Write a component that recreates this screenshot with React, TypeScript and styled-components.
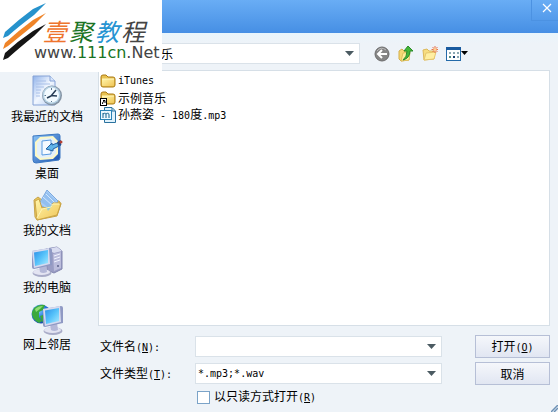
import React, { useState } from 'react';
import styled, { createGlobalStyle } from 'styled-components';

const GlobalStyle = createGlobalStyle`
  * { box-sizing: border-box; }
  body { margin: 0; }
  body, button, input, select {
    font-family: "Noto Sans CJK SC", sans-serif;
    font-size: 12px;
    line-height: 16px;
    color: #000;
  }
`;

const Dialog = styled.div`
  position: relative;
  display: flex;
  flex-direction: column;
  min-height: 100vh;
  background: #eef3f8;
`;

const TitleBar = styled.header`
  display: flex;
  justify-content: flex-end;
  height: 33px;
  background: linear-gradient(#69adf5, #468fe4);
`;

const CloseButton = styled.button`
  display: flex;
  align-items: flex-start;
  justify-content: center;
  width: 27px;
  height: 21px;
  padding: 3px 0 0 4px;
  border: solid #4c92e2;
  border-width: 0 0 1px 1px;
  background: transparent;
`;

const Body = styled.div`
  display: flex;
  flex: 1;
  background: linear-gradient(#e8f5fc, #eef3f8 10px);
`;

const Places = styled.nav`
  display: flex;
  flex-direction: column;
  gap: 8px;
  flex: none;
  width: 98px;
  padding: 42px 4px 0 0;
`;

const Place = styled.button`
  display: flex;
  flex-direction: column;
  align-items: center;
  gap: 1px;
  padding: 0;
  border: 0;
  background: transparent;
  white-space: nowrap;
`;

const Main = styled.main`
  display: flex;
  flex: 1;
  flex-direction: column;
  min-width: 0;
  padding-right: 8px;
`;

const Toolbar = styled.div`
  display: flex;
  align-items: center;
  gap: 8px;
  height: 37px;
  padding: 4px 82px 0 0;
`;

const ToolButton = styled.button`
  display: flex;
  padding: 0;
  border: 0;
  background: transparent;
`;

const ComboBox = styled.div<{ $trailing?: number }>`
  display: grid;
  flex: 1;
  align-items: center;
  min-width: 0;
  height: 21px;
  margin-right: ${(p) => p.$trailing ?? 0}px;
  border: 1px solid #dae2e9;
  background: #fff;
`;

const ComboSelect = styled.select<{ $indent: number }>`
  grid-area: 1 / 1;
  appearance: none;
  width: 100%;
  height: 19px;
  padding: 0 20px 0 ${(p) => p.$indent}px;
  border: 0;
  background: transparent;
  outline: none;
`;

const TypeSelect = styled(ComboSelect)`
  font-family: "DejaVu Sans Mono", monospace;
  font-size: 10px;
`;

const ComboInput = styled.input`
  grid-area: 1 / 1;
  width: 100%;
  height: 19px;
  padding: 0 20px 0 2px;
  border: 0;
  background: transparent;
  outline: none;
`;

const Arrow = styled.svg`
  grid-area: 1 / 1;
  justify-self: end;
  margin-right: 5px;
  pointer-events: none;
`;

const FileList = styled.ul`
  flex: 1;
  margin: 0;
  padding: 1px;
  border: 1px solid #d6dfe7;
  background: #fff;
  list-style: none;
`;

const FileItem = styled.button`
  display: flex;
  align-items: center;
  gap: 2px;
  height: 17px;
  padding: 0;
  border: 0;
  background: transparent;
  white-space: pre;
`;

const Latin = styled.span`
  font-family: "DejaVu Sans Mono", monospace;
  font-size: 10px;
  white-space: pre;
`;

const Form = styled.form`
  display: grid;
  grid-template-columns: 97px 1fr 75px;
  grid-template-rows: 23px 23px 16px;
  row-gap: 4px;
  align-items: center;
  padding: 9px 0 7px;
`;

const FieldLabel = styled.label`
  padding-left: 2px;
`;

const PushButton = styled.button`
  height: 23px;
  padding: 0;
  border: 1px solid #b6bfd6;
  background: linear-gradient(#f5f7fb, #e1e6f2);
`;

const ReadOnly = styled.label`
  display: flex;
  grid-column: 2;
  align-items: center;
  gap: 4px;
  padding-left: 2px;
`;

const CheckBox = styled.input`
  appearance: none;
  width: 13px;
  height: 13px;
  margin: 0;
  border: 1px solid #7ba3c8;
  background: #fff;
  &:checked { background: #4a93e6; }
`;

const Grip = styled.svg`
  position: absolute;
  right: 0;
  bottom: 0;
`;

const Logo = styled.div`
  position: absolute;
  top: 0;
  left: 0;
  width: 162px;
  height: 72px;
  background: #fff;
`;

const LogoStripes = styled.svg`
  position: absolute;
  top: 0;
  left: 0;
`;

const LogoText = styled.div`
  position: relative;
  padding: 17px 0 0 34px;
`;

const LogoName = styled.div`
  display: flex;
  gap: 2px;
  padding-left: 9px;
  font-size: 24px;
  font-style: italic;
  font-weight: 400;
  line-height: 28px;
`;

const LogoUrl = styled.div`
  font-family: "DejaVu Sans", sans-serif;
  font-size: 16px;
  line-height: 16px;
  color: #444;
`;

const Tint = styled.span<{ $color: string }>`
  color: ${(p) => p.$color};
`;

const DropArrow = () => (
  <Arrow width="9" height="5" viewBox="0 0 9 5"><path d="M0 0H9L4.5 5Z" fill="#4b5b62" /></Arrow>
);

const Key = ({ k, colon }: { k: string; colon?: boolean }) => (
  <Latin>(<u>{k}</u>){colon ? ':' : ''}</Latin>
);

const Monitor = ({ x, y }: { x: number; y: number }) => (
  <g transform={`translate(${x} ${y})`}>
    <ellipse cx="10" cy="25" rx="9.500" ry="4" fill="#a9acc8" />
    <ellipse cx="9.500" cy="24" rx="8.500" ry="3" fill="#e3e4f2" />
    <path d="M7 18l7-1 1 7q-4 2-7 0z" fill="#b4b8d8" />
    <path d="M0 3L18 0Q20 0 20 2V17L2 21Q0 21 0 19Z" fill="#8f99c4" />
    <path d="M0 3L17 0 18 16 2 20Z" fill="#d5daef" />
    <path d="M2 4.500L16 2V15L3 18Z" fill="url(#screen)" />
  </g>
);

const Gradients = () => (
  <defs>
    <linearGradient id="screen" x1="0" y1="0" x2="1" y2="1">
      <stop offset="0" stopColor="#2c8ee6" /><stop offset=".5" stopColor="#56c2fa" /><stop offset="1" stopColor="#a9ebff" />
    </linearGradient>
    <linearGradient id="paper" x1="0" y1="0" x2="1" y2="1">
      <stop offset="0" stopColor="#8fb2ea" /><stop offset=".5" stopColor="#f2f7ff" /><stop offset="1" stopColor="#b4cdf3" />
    </linearGradient>
    <linearGradient id="desk" x1="0" y1="0" x2="1" y2="1">
      <stop offset="0" stopColor="#8cc6f8" /><stop offset="1" stopColor="#174fae" />
    </linearGradient>
    <linearGradient id="fold" x1="0" y1="0" x2="1" y2="1">
      <stop offset="0" stopColor="#fff5a9" /><stop offset="1" stopColor="#f0c558" />
    </linearGradient>
    <radialGradient id="globe" cx=".35" cy=".3" r=".8">
      <stop offset="0" stopColor="#8ad4ff" /><stop offset=".5" stopColor="#2878dc" /><stop offset="1" stopColor="#123a95" />
    </radialGradient>
  </defs>
);

const RecentIcon = () => (
  <svg width="32" height="32" viewBox="0 0 32 32">
    <Gradients />
    <path d="M2 1H19L24 6V30H2Z" fill="url(#paper)" stroke="#86a2d6" />
    <path d="M19 1V6H24" fill="#d8e6fb" stroke="#86a3d6" />
    <path d="M5 6H15M5 9H19M5 12H13M5 15H10M5 18H9M5 21H9" stroke="#a9c0e8" />
    <circle cx="21" cy="20.500" r="10" fill="#8594a5" />
    <circle cx="20.500" cy="20" r="9" fill="#b3cfe2" />
    <circle cx="20.500" cy="20" r="7.500" fill="#f2faff" />
    <path d="M20 21L25 15M20 20.500L26 21M20 21L16 23" stroke="#273d56" strokeWidth="1.500" />
    <path d="M20.500 13V15M20.500 26V27M13.500 20.500H15" stroke="#5d7892" />
  </svg>
);

const DesktopIcon = () => (
  <svg width="32" height="32" viewBox="0 0 32 32">
    <path d="M2 4L27 2Q29 2 29 4V26L28 28L5 31Q2 31 2 28Z" fill="url(#desk)" stroke="#3a77c2" />
    <path d="M9 5L22 4 27 9V22L22 27 9 28 4 24V10Z" fill="#fbf8c8" />
    <path d="M10 7L21 6 25 10V21L21 25 10 26 6 22V11Z" fill="#e3f0fb" />
    <path d="M11 9L20 8V22L11 23Z" fill="#f5faff" stroke="#5a9be0" />
    <path d="M29 10L21 13V11L15 17 22 19V17L30 13Z" fill="#61b5e9" stroke="#2362a4" />
    <path d="M26 10L30 8V13L27 14Z" fill="#284e8c" />
    <circle cx="30" cy="10" r="1.500" fill="#b44136" />
  </svg>
);

const DocumentsIcon = () => (
  <svg width="32" height="32" viewBox="0 0 32 32">
    <path d="M3 11L7 8 11 11 28 12 30 15 26 27 6 31 4 28Z" fill="#eac85b" stroke="#c6a34b" />
    <path d="M16 1L27 12 20 23 8 15Z" fill="#a9cdf6" stroke="#7aa8de" />
    <path d="M16 3L25 12 18 19 10 13Z" fill="#92bff0" />
    <path d="M12 8L22 17M15 5L24 14" stroke="#d2e6fc" />
    <path d="M4 12L8 10 11 19 20 18 22 14 30 14 26 26 6 31Z" fill="url(#fold)" stroke="#cba546" />
    <path d="M15 18L22 16 17 22Z" fill="#8fc9df" />
    <path d="M6 29L11 20 20 18 22 15 28 15" fill="none" stroke="#fff6b8" />
  </svg>
);

const ComputerIcon = () => (
  <svg width="32" height="32" viewBox="0 0 32 32">
    <path d="M15 3L26 1 31 5V23L23 27 16 24Z" fill="#9a9dc4" stroke="#8286b0" />
    <path d="M15 3L26 1 31 5 23 7Z" fill="#d9dcf0" />
    <path d="M22 8L30 6V22L23 25Z" fill="#bcbddc" />
    <path d="M23 10L29 8M23 13L29 11M23 16L29 14" stroke="#f0f2ff" />
    <circle cx="27" cy="20" r="1" fill="#5d638b" />
    <Monitor x={1} y={2} />
  </svg>
);

const NetworkIcon = () => (
  <svg width="32" height="32" viewBox="0 0 32 32">
    <circle cx="10" cy="11" r="9.500" fill="url(#globe)" />
    <path d="M3 5Q8 1 14 2L12 7 8 9 8 14 11 18 8 20Q0 16 1 9ZM9 13L15 11 17 16 12 20Z" fill="#3ba93d" />
    <path d="M4 6Q7 3 12 3L9 6 5 9Z" fill="#91dd74" />
    <Monitor x={12} y={3} />
  </svg>
);

const Folder = ({ shortcut }: { shortcut?: boolean }) => (
  <svg width="16" height="16" viewBox="0 0 16 16">
    <path d="M1 4Q1 2 3 2H6L8 4H13Q15 4 15 6V12Q15 14 13 14H3Q1 14 1 12Z" fill="#e8c150" stroke="#ab7b14" />
    <path d="M2 6H14V12Q14 13 13 13H3Q2 13 2 12Z" fill="url(#fold)" />
    <path d="M2 6H14" stroke="#fff7be" />
    {shortcut && (
      <>
        <rect x=".5" y="8.500" width="6" height="7" fill="#fff" stroke="#000" />
        <path d="M2.500 14Q2 12 4.500 11M3 10.500H5V13" fill="none" stroke="#000" />
      </>
    )}
  </svg>
);

const MusicFile = () => (
  <svg width="16" height="16" viewBox="0 0 16 16">
    <path d="M4.500 .5H12L15.500 4V15.500H4.500Z" fill="#e0f2fc" stroke="#2a729f" />
    <path d="M12 1V4H15" fill="none" stroke="#2a729f" />
    <rect x=".5" y="3.500" width="11" height="9" fill="#edf9ff" stroke="#2a83b5" />
    <path d="M3 11V6M3 7Q6 5 6 8V11M6 7Q9 5 9 8V11" fill="none" stroke="#17658f" />
  </svg>
);

const BackIcon = () => (
  <svg width="16" height="16" viewBox="0 0 16 16">
    <circle cx="8" cy="8" r="7" fill="#858585" stroke="#6c6c6c" />
    <path d="M3 5Q7 0 12 4" stroke="#bbb" fill="none" />
    <path d="M13 8H4M8 4L4 8L8 12" stroke="#fff" strokeWidth="2" fill="none" />
  </svg>
);

const UpIcon = () => (
  <svg width="16" height="16" viewBox="0 0 16 16">
    <path d="M1 5L4 3 6 5 11 4V14L3 15 1 13Z" fill="#f5d873" stroke="#d5ae4a" />
    <path d="M3 15L5 7 12 6 11 14Z" fill="#ffef9b" stroke="#dfbf5f" />
    <path d="M5 14Q9 11 9 5H6L10 0L15 5H12Q12 12 5 14Z" fill="#44b737" stroke="#2a8a2a" />
  </svg>
);

const NewFolderIcon = () => (
  <svg width="16" height="16" viewBox="0 0 16 16">
    <path d="M1 4L5 3 7 5 12 5V13L2 14Z" fill="#f7dd80" stroke="#dcb95c" />
    <path d="M2 14L4 7 14 6 12 13Z" fill="#ffefa1" stroke="#e5c66e" />
    <path d="M13 0V7M9.500 3.500H16.500M10.500 1L15.500 6M15.500 1L10.500 6" stroke="#e87048" />
    <circle cx="13" cy="3.500" r="1.500" fill="#ffd390" />
  </svg>
);

const ViewsIcon = () => (
  <svg width="22" height="16" viewBox="0 0 22 16">
    <rect x=".5" y="1.500" width="14" height="13" fill="#fff" stroke="#246aa9" />
    <path d="M0 1H15V4H0Z" fill="#195a9f" />
    <path d="M3 6H5V8H3ZM7 6H9V8H7ZM11 6H13V8H11ZM11 10H13V12H11Z" fill="#8ca8b3" />
    <path d="M3 10H5V12H3Z" fill="#508e82" /><path d="M7 10H9V12H7Z" fill="#163d6e" />
    <path d="M15 5H22L18.500 9Z" fill="#000" />
  </svg>
);

const places = [
  { label: '我最近的文档', Icon: RecentIcon },
  { label: '桌面', Icon: DesktopIcon },
  { label: '我的文档', Icon: DocumentsIcon },
  { label: '我的电脑', Icon: ComputerIcon },
  { label: '网上邻居', Icon: NetworkIcon },
];

const tools = [
  { label: '后退', Icon: BackIcon },
  { label: '向上一级', Icon: UpIcon },
  { label: '新建文件夹', Icon: NewFolderIcon },
  { label: '查看', Icon: ViewsIcon },
];

export default function App() {
  const [fileName, setFileName] = useState('');
  return (
    <>
      <GlobalStyle />
      <Dialog role="dialog">
        <TitleBar>
          <CloseButton aria-label="关闭">
            <svg width="10" height="10" viewBox="0 0 10 10"><path d="M1 1L9 9M9 1L1 9" stroke="#fff" strokeWidth="1.200" /></svg>
          </CloseButton>
        </TitleBar>
        <Body>
          <Places>
            {places.map(({ label, Icon }) => (
              <Place key={label}><Icon />{label}</Place>
            ))}
          </Places>
          <Main>
            <Toolbar>
              <ComboBox $trailing={6}>
                <ComboSelect $indent={26} aria-label="查找范围"><option>我的音乐</option></ComboSelect>
                <DropArrow />
              </ComboBox>
              {tools.map(({ label, Icon }) => (
                <ToolButton key={label} aria-label={label}><Icon /></ToolButton>
              ))}
            </Toolbar>
            <FileList>
              <li><FileItem><Folder /><Latin>iTunes</Latin></FileItem></li>
              <li><FileItem><Folder shortcut />示例音乐</FileItem></li>
              <li><FileItem><MusicFile /><span>孙燕姿<Latin> - 180</Latin>度<Latin>.mp3</Latin></span></FileItem></li>
            </FileList>
            <Form onSubmit={(e) => e.preventDefault()}>
              <FieldLabel htmlFor="file-name">文件名<Key k="N" colon /></FieldLabel>
              <ComboBox $trailing={33}>
                <ComboInput id="file-name" value={fileName} onChange={(e) => setFileName(e.target.value)} />
                <DropArrow />
              </ComboBox>
              <PushButton type="submit">打开<Key k="O" /></PushButton>
              <FieldLabel htmlFor="file-type">文件类型<Key k="T" colon /></FieldLabel>
              <ComboBox $trailing={33}>
                <TypeSelect $indent={2} id="file-type"><option>*.mp3;*.wav</option></TypeSelect>
                <DropArrow />
              </ComboBox>
              <PushButton type="button">取消</PushButton>
              <ReadOnly><CheckBox type="checkbox" /><span>以只读方式打开<Key k="R" /></span></ReadOnly>
            </Form>
          </Main>
        </Body>
        <Grip width="7" height="7" viewBox="0 0 7 7"><path d="M0 7L7 0M3 7L7 3" stroke="#6d91b5" strokeWidth="1.500" /></Grip>
        <Logo>
          <LogoStripes width="50" height="64" viewBox="0 0 50 64">
            <path d="M46 3L33 9Q18 20 5 32L3 38L8 36Q18 27 34 15Z" fill="#2692cc" />
            <path d="M46 13L33 20Q18 31 5 43L3 49L8 46Q18 38 34 25Z" fill="#ef8428" />
            <path d="M46 24L33 31Q18 41 5 53L3 60L8 58Q18 49 34 36Z" fill="#151515" />
          </LogoStripes>
          <LogoText>
            <LogoName>
              <Tint $color="#ee742d">壹</Tint><Tint $color="#197323">聚</Tint><Tint $color="#2794d2">教</Tint><Tint $color="#444444">程</Tint>
            </LogoName>
            <LogoUrl>www.<Tint $color="#197323">111cn</Tint>.Net</LogoUrl>
          </LogoText>
        </Logo>
      </Dialog>
    </>
  );
}
